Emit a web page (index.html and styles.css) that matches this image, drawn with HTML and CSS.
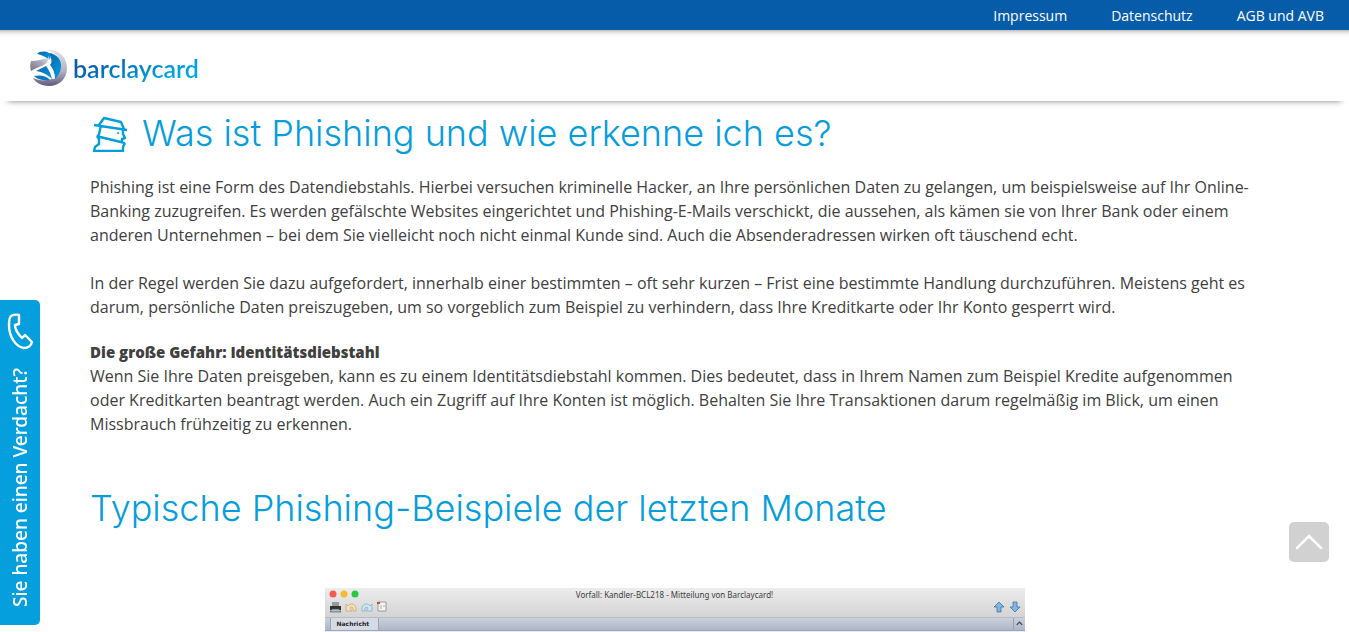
FILE: index.html
```html
<!DOCTYPE html>
<html lang="de">
<head>
<meta charset="utf-8">
<meta name="viewport" content="width=device-width, initial-scale=1">
<title>Was ist Phishing und wie erkenne ich es?</title>
<link rel="stylesheet" href="styles.css">
</head>
<body>
<nav class="topbar">
  <a href="#">Impressum</a>
  <a href="#">Datenschutz</a>
  <a href="#">AGB und AVB</a>
</nav>
<header class="header">
  <a class="brand" href="#">
    <svg class="brand-mark" viewBox="0 0 38 38" aria-hidden="true">
      <defs>
        <linearGradient id="ring" x1="0" y1="0" x2="0" y2="1"><stop offset="0" stop-color="#e4e3ea"/><stop offset=".6" stop-color="#b3afc0"/><stop offset="1" stop-color="#605a7c"/></linearGradient>
        <linearGradient id="ocean" x1="0" y1="0" x2="1" y2="1"><stop offset="0" stop-color="#0a62ae"/><stop offset="1" stop-color="#009fdf"/></linearGradient>
        <linearGradient id="band" x1="0" y1="1" x2="1" y2="0"><stop offset="0" stop-color="#77728d"/><stop offset=".6" stop-color="#aaa6b8"/><stop offset="1" stop-color="#dddbe4"/></linearGradient>
      </defs>
      <path fill="url(#ring)" d="M17 1C29-1 38 8 38 19S30 37 20 37C12 37 6 33 4 29c12 5 27 2 28-11C33 10 27 3 17 1z"/>
      <path fill="url(#ocean)" d="M20 4c8 1 13 7 12 14 0 5-3 9-6 12-1-6-2-10-5-14 3-3 1-7-1-12z"/>
      <path fill="url(#ocean)" d="M8 5c3-3 8-3 12-1 2 3 2 5 0 7-2-2-3-3-6-4-2-1-4-2-6-2z"/>
      <path fill="#fff" d="M19 7c2 3 2 5 1 8 4 4 6 9 6 15l-4-1c-1-5-3-9-6-12 3-3 4-6 3-10z"/>
      <path fill="url(#ocean)" d="M7 22l10-5c3 4 5 8 6 13-4-4-9-7-16-8z"/>
      <path fill="url(#band)" d="M2 12c6 0 11-2 17-3 1 7-8 8-17 13-1-3-1-7 0-10z"/>
      <path fill="#0a78c0" d="M5 27c6-1 11-1 16 4-6 1-12 0-16-4z"/>
    </svg>
    <span class="brand-name">barclaycard</span>
  </a>
</header>
<main class="content">
  <h1 class="title">
    <svg class="title-icon" viewBox="0 0 38 38" aria-hidden="true">
      <path d="M2 11l33 5M7 11l5-7 17 4 3 7M8 12c1 3-1 6-1 9M31 16v4l2 4-3 1v3M5 21l3 2 25 6M5 22l2 3v5l-4 3-1 4h29v-4l2-4"/>
      <circle cx="26" cy="19" r="1"/>
    </svg>
    <span>Was ist Phishing und wie erkenne ich es?</span>
  </h1>
  <p>Phishing ist eine Form des Datendiebstahls. Hierbei versuchen kriminelle Hacker, an Ihre persönlichen Daten zu gelangen, um beispielsweise auf Ihr Online-Banking zuzugreifen. Es werden gefälschte Websites eingerichtet und Phishing-E-Mails verschickt, die aussehen, als kämen sie von Ihrer Bank oder einem anderen Unternehmen – bei dem Sie vielleicht noch nicht einmal Kunde sind. Auch die Absenderadressen wirken oft täuschend echt.</p>
  <p>In der Regel werden Sie dazu aufgefordert, innerhalb einer bestimmten – oft sehr kurzen – Frist eine bestimmte Handlung durchzuführen. Meistens geht es darum, persönliche Daten preiszugeben, um so vorgeblich zum Beispiel zu verhindern, dass Ihre Kreditkarte oder Ihr Konto gesperrt wird.</p>
  <h3 class="subtitle">Die große Gefahr: Identitätsdiebstahl</h3>
  <p>Wenn Sie Ihre Daten preisgeben, kann es zu einem Identitätsdiebstahl kommen. Dies bedeutet, dass in Ihrem Namen zum Beispiel Kredite aufgenommen oder Kreditkarten beantragt werden. Auch ein Zugriff auf Ihre Konten ist möglich. Behalten Sie Ihre Transaktionen darum regelmäßig im Blick, um einen Missbrauch frühzeitig zu erkennen.</p>
  <h2 class="section-title">Typische Phishing-Beispiele der letzten Monate</h2>
  <figure class="mail">
    <div class="mail-head">
      <svg class="lights" viewBox="0 0 32 10" aria-hidden="true"><circle cx="5" cy="5" r="3.5" fill="#f25a52"/><circle cx="16" cy="5" r="3.5" fill="#f7b92f"/><circle cx="27" cy="5" r="3.5" fill="#2ac740"/></svg>
      <span class="mail-title">Vorfall: Kandler-BCL218 - Mitteilung von Barclaycard!</span>
    </div>
    <div class="mail-tools">
      <svg class="tools-left" viewBox="0 0 60 14" aria-hidden="true">
        <path d="M3 1h7v4H3z" fill="#999"/><path d="M1 5h11v4H1z" fill="#333"/><path d="M3 8h7l2 3H1z" fill="#a9c2ca" stroke="#444" stroke-width=".6"/>
        <path d="M17 10V3l2 2c3-4 9-2 8 5h-3c1-4-2-5-3-3l2 3z" fill="#f3e0bb" stroke="#cda86a" stroke-width=".8"/>
        <path d="M43 10V3l-2 2c-3-4-9-2-8 5h3c-1-4 2-5 3-3l-2 3z" fill="#d3e6f0" stroke="#83adc8" stroke-width=".8"/>
        <path d="M49 1h8v9h-8z" fill="#f5f5f5" stroke="#888" stroke-width=".8"/><path d="M48 1h3v2h-3z" fill="#c34b40"/><path d="M51 5h2m1 0h2m-5 2h2" stroke="#aaa"/>
      </svg>
      <svg class="tools-right" viewBox="0 0 28 14" aria-hidden="true" fill="#80b7e8" stroke="#456f9e" stroke-width=".8"><path d="M6 1l5 5H8v5H4V6H1z"/><path d="M22 11l5-5h-3V1h-4v5h-3z"/></svg>
    </div>
    <div class="mail-tabs">
      <span class="mail-tab">Nachricht</span>
      <svg class="mail-collapse" viewBox="0 0 12 12" aria-hidden="true"><path d="M3 7l3-3 3 3" fill="none" stroke="#444" stroke-width="1.4"/></svg>
    </div>
    <div class="mail-body"></div>
  </figure>
</main>
<a class="help-tab" href="#">
  <span>Sie haben einen Verdacht?</span>
  <svg class="phone" viewBox="0 0 28 38" aria-hidden="true"><path d="M5 3q4-2 8-1v9l-4 1c0 5 3 9 7 13l3-3 7 7c-1 4-4 6-8 6C10 34 3 24 3 12 3 8 3 5 5 3z"/></svg>
</a>
<button class="to-top" type="button" aria-label="Nach oben">
  <svg viewBox="0 0 40 40" aria-hidden="true"><path d="M8 26l12-12 12 12"/></svg>
</button>
</body>
</html>
```
FILE: styles.css
```css
* { box-sizing: border-box; }
body {
  margin: 0;
  background: #fff;
  color: #404040;
  font: 16px/24px "Open Sans", sans-serif;
}
.topbar {
  display: flex;
  justify-content: flex-end;
  gap: 44px;
  padding: 1px 25px 0;
  background: #075ca9;
  font-size: 14px;
  line-height: 29px;
}
.topbar a { color: #fff; text-decoration: none; }
.header {
  display: flex;
  align-items: center;
  height: 71px;
  padding: 5px 29px 0;
  box-shadow: 0 8px 6px -8px rgba(0, 0, 0, .5), inset 0 8px 6px -8px rgba(0, 0, 0, .5);
}
.brand { display: flex; align-items: center; gap: 6px; text-decoration: none; }
.brand-mark { width: 38px; height: 38px; }
.brand-name {
  font: 600 25px/32px Lato, sans-serif;
  background: linear-gradient(160deg, #0a5cab 25%, #00a5e3 75%);
  background-clip: text;
  -webkit-background-clip: text;
  color: transparent;
}
.content { padding: 0 90px; }
.content p { margin: 0 0 24px; }
.title, .section-title {
  margin: 0;
  color: #069ddc;
  font-family: Inter, sans-serif;
  font-size: 36px;
  font-weight: 300;
  line-height: 48px;
}
.title { display: flex; align-items: center; gap: 12px; padding: 8px 0 18px; }
.title-icon { width: 40px; height: 38px; padding-left: 2px; fill: #069ddc; }
.title-icon path { fill: none; stroke: #069ddc; stroke-width: 2.4; stroke-linejoin: round; }
.subtitle {
  margin: 0;
  padding-bottom: 3px;
  font: 800 15px/18px "Open Sans", sans-serif;
}
.section-title { padding-top: 24px; }
.mail {
  max-width: 700px;
  margin: 56px auto 0;
  background: linear-gradient(#ececec, #d4d4d4 29px);
  font: 8px/12px "Noto Sans", sans-serif;
}
.mail-head { display: grid; grid-template-columns: 1fr auto 1fr; padding: 0 3px; line-height: 13px; }
.lights { width: 32px; height: 12px; }
.mail-tools { display: flex; justify-content: space-between; padding: 0 4px 2px; }
.tools-left { width: 60px; height: 14px; }
.tools-right { width: 28px; height: 14px; }
.mail-tabs {
  display: flex;
  justify-content: space-between;
  padding: 0 0 0 5px;
  border-top: 1px solid #b8bcc4;
  background: linear-gradient(#cbd1dc, #adb7c8);
}
.mail-tab {
  padding: 0 9px 0 6px;
  border: solid #9aa5b8;
  border-width: 0 1px;
  background: #d5dae4;
  color: #222;
  font: 700 6px/12px "DejaVu Sans", sans-serif;
}
.mail-collapse { width: 12px; height: 12px; border-left: 1px solid #98a2b4; }
.mail-body { height: 2px; border-top: 1px solid #9ca5b3; background: #e9edf3; }
.help-tab {
  position: fixed;
  left: 0;
  top: 300px;
  display: flex;
  flex-direction: column-reverse;
  align-items: center;
  justify-content: flex-end;
  gap: 17px;
  width: 40px;
  height: 325px;
  padding: 13px 0 19px;
  border-radius: 0 5px 5px 0;
  background: #069fde;
  color: #fff;
  text-decoration: none;
}
.help-tab span {
  writing-mode: vertical-rl;
  transform: rotate(180deg);
  font: 500 19px/40px "Noto Sans", sans-serif;
  white-space: nowrap;
}
.phone { width: 28px; height: 38px; fill: none; stroke: #fff; stroke-width: 2.4; stroke-linejoin: round; flex: none; }
.to-top {
  position: fixed;
  right: 20px;
  bottom: 70px;
  width: 40px;
  height: 40px;
  padding: 0;
  border: 0;
  border-radius: 5px;
  background: #d1d1d1;
}
.to-top svg { display: block; fill: none; stroke: #fff; stroke-width: 2.5; stroke-linecap: round; }
```
